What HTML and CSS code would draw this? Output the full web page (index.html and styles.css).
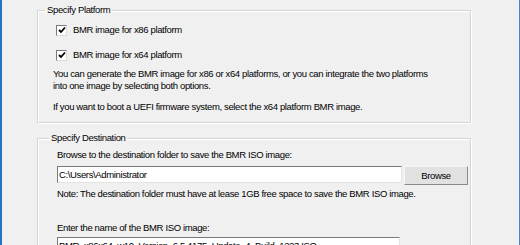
FILE: index.html
```html
<!DOCTYPE html>
<html lang="en">
<head>
    <meta charset="UTF-8">
    <title>Create BMR ISO Image</title>
    <link rel="stylesheet" href="styles.css">
</head>
<body>
    <div class="edge left-edge"></div>
    <div class="main">
        <fieldset class="group platform">
            <legend>Specify Platform</legend>
            <label class="check first">
                <span class="box"><svg width="8" height="8" viewBox="0 0 8 8"><polyline points="1,4 3,6 7,1.5" fill="none" stroke="#000" stroke-width="1.8"/></svg></span>
                BMR image for x86 platform
            </label>
            <label class="check second">
                <span class="box"><svg width="8" height="8" viewBox="0 0 8 8"><polyline points="1,4 3,6 7,1.5" fill="none" stroke="#000" stroke-width="1.8"/></svg></span>
                BMR image for x64 platform
            </label>
            <p class="info">You can generate the BMR image for x86 or x64 platforms, or you can integrate the two platforms<br>into one image by selecting both options.</p>
            <p class="info uefi">If you want to boot a UEFI firmware system, select the x64 platform BMR image.</p>
        </fieldset>
        <fieldset class="group destination">
            <legend>Specify Destination</legend>
            <div class="field-label">Browse to the destination folder to save the BMR ISO image:</div>
            <div class="browse-row">
                <div class="textbox">C:\Users\Administrator</div>
                <button class="btn">Browse</button>
            </div>
            <div class="note">Note: The destination folder must have at lease 1GB free space to save the BMR ISO image.</div>
            <div class="field-label name-label">Enter the name of the BMR ISO image:</div>
            <div class="textbox name-box">BMR_x86x64_w10_Version_6.5.4175_Update_4_Build_1223.ISO</div>
        </fieldset>
    </div>
    <div class="edge right-edge"></div>
</body>
</html>
```

FILE: styles.css
```css
html, body {
    height: 100%;
}
body {
    margin: 0;
    display: flex;
    background-color: #f0f0f0;
    font-family: "Liberation Sans", Arial, sans-serif;
    font-size: 9.5px;
    line-height: 12px;
    letter-spacing: -0.36px;
    color: #000;
    overflow: hidden;
}
.edge {
    flex: none;
    background-color: #2b72c2;
}
.left-edge {
    width: 2px;
}
.right-edge {
    width: 1px;
    margin-left: auto;
    background-color: #4a86c8;
}
.main {
    padding-left: 35px;
    width: 434px;
}
.group {
    margin: 0;
    padding: 0 0 0 15px;
    border: 1px solid #d5d5d5;
    box-shadow: inset 1px 1px 0 #fff, 1px 1px 0 #fff;
    min-width: 0;
}
.group legend {
    padding: 0 2px;
    margin-left: -8px;
}
.platform {
    margin-top: 4px;
    padding-bottom: 9px;
}
.check {
    display: flex;
    align-items: center;
    gap: 6px;
    margin-left: 3px;
    height: 12px;
}
.check.first {
    margin-top: 8px;
}
.check.second {
    margin-top: 13px;
}
.box {
    width: 9px;
    height: 9px;
    background: #fff;
    border: 1px solid;
    border-color: #7a7a7a #dcdcdc #dcdcdc #7a7a7a;
    display: flex;
    align-items: center;
    justify-content: center;
}
.info {
    margin: 7px 0 0;
}
.info.uefi {
    margin-top: 9px;
}
.destination {
    margin-top: 9px;
    padding-left: 19px;
    height: 200px;
}
.field-label {
    margin-top: 5px;
}
.browse-row {
    display: flex;
    gap: 2px;
    margin-top: 5px;
    height: 19px;
}
.textbox {
    width: 342px;
    height: 15px;
    line-height: 15px;
    padding-left: 1px;
    background: #fff;
    border: 1px solid;
    border-color: #7a7a7a #e3e3e3 #e3e3e3 #7a7a7a;
    white-space: nowrap;
    overflow: hidden;
}
.btn {
    width: 64px;
    height: 19px;
    padding: 0;
    font: inherit;
    letter-spacing: inherit;
    color: #000;
    background: #e1e1e1;
    border: 1px solid;
    border-color: #f5f5f5 #8a8a8a #8a8a8a #f5f5f5;
}
.note {
    margin-top: 3px;
}
.name-label {
    margin-top: 22px;
}
.name-box {
    margin-top: 3px;
    width: 340px;
}
```
